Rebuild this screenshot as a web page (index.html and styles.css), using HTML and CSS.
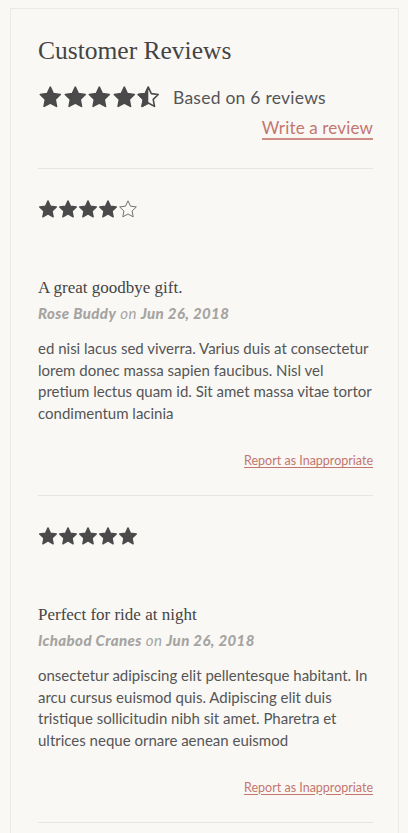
FILE: index.html
```html
<!DOCTYPE html>
<html>
<head>
<meta charset="utf-8">
<link rel="stylesheet" href="styles.css">
</head>
<body>
<svg width="0" height="0" class="defs">
  <defs>
    <polygon id="star" points="12,2.2 15,8.6 22,9.5 16.9,14.4 18.2,21.4 12,18 5.8,21.4 7.1,14.4 2,9.5 9,8.6"/>
    <clipPath id="half"><rect x="0" y="0" width="12" height="24"/></clipPath>
  </defs>
</svg>
<div class="card">
  <div class="summary">
    <h2 class="title">Customer Reviews</h2>
    <div class="summary-row">
      <div class="stars big">
        <svg viewBox="0 0 24 24"><use href="#star" class="fill"/></svg>
        <svg viewBox="0 0 24 24"><use href="#star" class="fill"/></svg>
        <svg viewBox="0 0 24 24"><use href="#star" class="fill"/></svg>
        <svg viewBox="0 0 24 24"><use href="#star" class="fill"/></svg>
        <svg viewBox="0 0 24 24"><use href="#star" class="outline"/><use href="#star" class="fill" clip-path="url(#half)"/></svg>
      </div>
      <span class="based">Based on 6 reviews</span>
    </div>
    <div class="write-row"><a class="write" href="#">Write a review</a></div>
  </div>

  <div class="review">
    <div class="stars small">
      <svg viewBox="0 0 24 24"><use href="#star" class="fill"/></svg>
      <svg viewBox="0 0 24 24"><use href="#star" class="fill"/></svg>
      <svg viewBox="0 0 24 24"><use href="#star" class="fill"/></svg>
      <svg viewBox="0 0 24 24"><use href="#star" class="fill"/></svg>
      <svg viewBox="0 0 24 24"><use href="#star" class="thin"/></svg>
    </div>
    <h3 class="review-title">A great goodbye gift.</h3>
    <p class="meta"><b>Rose Buddy</b> on <b>Jun 26, 2018</b></p>
    <p class="body">ed nisi lacus sed viverra. Varius duis at consectetur lorem donec massa sapien faucibus. Nisl vel pretium lectus quam id. Sit amet massa vitae tortor condimentum lacinia</p>
    <div class="report-row"><a class="report" href="#">Report as Inappropriate</a></div>
  </div>

  <div class="review">
    <div class="stars small">
      <svg viewBox="0 0 24 24"><use href="#star" class="fill"/></svg>
      <svg viewBox="0 0 24 24"><use href="#star" class="fill"/></svg>
      <svg viewBox="0 0 24 24"><use href="#star" class="fill"/></svg>
      <svg viewBox="0 0 24 24"><use href="#star" class="fill"/></svg>
      <svg viewBox="0 0 24 24"><use href="#star" class="fill"/></svg>
    </div>
    <h3 class="review-title">Perfect for ride at night</h3>
    <p class="meta"><b>Ichabod Cranes</b> on <b>Jun 26, 2018</b></p>
    <p class="body">onsectetur adipiscing elit pellentesque habitant. In arcu cursus euismod quis. Adipiscing elit duis tristique sollicitudin nibh sit amet. Pharetra et ultrices neque ornare aenean euismod</p>
    <div class="report-row"><a class="report" href="#">Report as Inappropriate</a></div>
  </div>
</div>
</body>
</html>
```

FILE: styles.css
```css
html, body {
  margin: 0;
  padding: 0;
  background: #f9f8f5;
}
body {
  font-family: Lato, "Noto Sans", sans-serif;
  color: #555;
  overflow: hidden;
}
.defs {
  position: absolute;
  width: 0;
  height: 0;
}
.card {
  box-sizing: border-box;
  margin: 8px 9px 0 10px;
  border: 1px solid #ebe9e5;
  border-bottom: none;
  padding: 0 25px 0 27px;
  height: 825px;
  overflow: hidden;
}
.summary {
  padding-top: 27px;
  padding-bottom: 28px;
  border-bottom: 1px solid #e8e6e2;
}
.title {
  margin: 0;
  font-family: "Liberation Serif", serif;
  font-weight: normal;
  font-size: 25.5px;
  line-height: 30px;
  color: #444;
}
.summary-row {
  display: flex;
  align-items: center;
  margin-top: 19px;
}
.stars {
  display: flex;
}
.stars svg {
  display: block;
}
.stars.big svg {
  width: 24.6px;
  height: 24px;
}
.stars.small svg {
  width: 20px;
  height: 20px;
}
.fill {
  fill: #4a4a4a;
  stroke: #4a4a4a;
  stroke-width: 1.6;
  stroke-linejoin: round;
}
.outline {
  fill: none;
  stroke: #4a4a4a;
  stroke-width: 1.6;
  stroke-linejoin: round;
}
.thin {
  fill: none;
  stroke: #666;
  stroke-width: 1.1;
  stroke-linejoin: round;
}
.based {
  margin-left: 12px;
  font-size: 17.5px;
  letter-spacing: 0.25px;
  color: #555;
}
.write-row {
  display: flex;
  justify-content: flex-end;
  margin-top: 9px;
}
.write {
  font-size: 17px;
  line-height: 20px;
  letter-spacing: 0.15px;
  color: #c4766e;
  text-decoration: none;
  border-bottom: 2px solid #cf8c85;
}
.review {
  padding-top: 30px;
  padding-bottom: 27px;
  border-bottom: 1px solid #e8e6e2;
}
.review-title {
  margin: 58px 0 0;
  font-family: "Liberation Serif", serif;
  font-weight: normal;
  font-size: 17px;
  line-height: 22px;
  color: #444;
}
.meta {
  margin: 5px 0 0;
  font-size: 15px;
  line-height: 18px;
  font-style: italic;
  letter-spacing: 0.4px;
  color: #a6a4a1;
}
.meta b {
  font-weight: 900;
}
.body {
  margin: 16px 0 0;
  font-size: 15px;
  line-height: 21.7px;
  color: #555;
}
.report-row {
  display: flex;
  justify-content: flex-end;
  margin-top: 28px;
}
.report {
  font-size: 12.5px;
  line-height: 15px;
  color: #c4766e;
  text-decoration: underline;
  text-underline-offset: 2px;
}
```
